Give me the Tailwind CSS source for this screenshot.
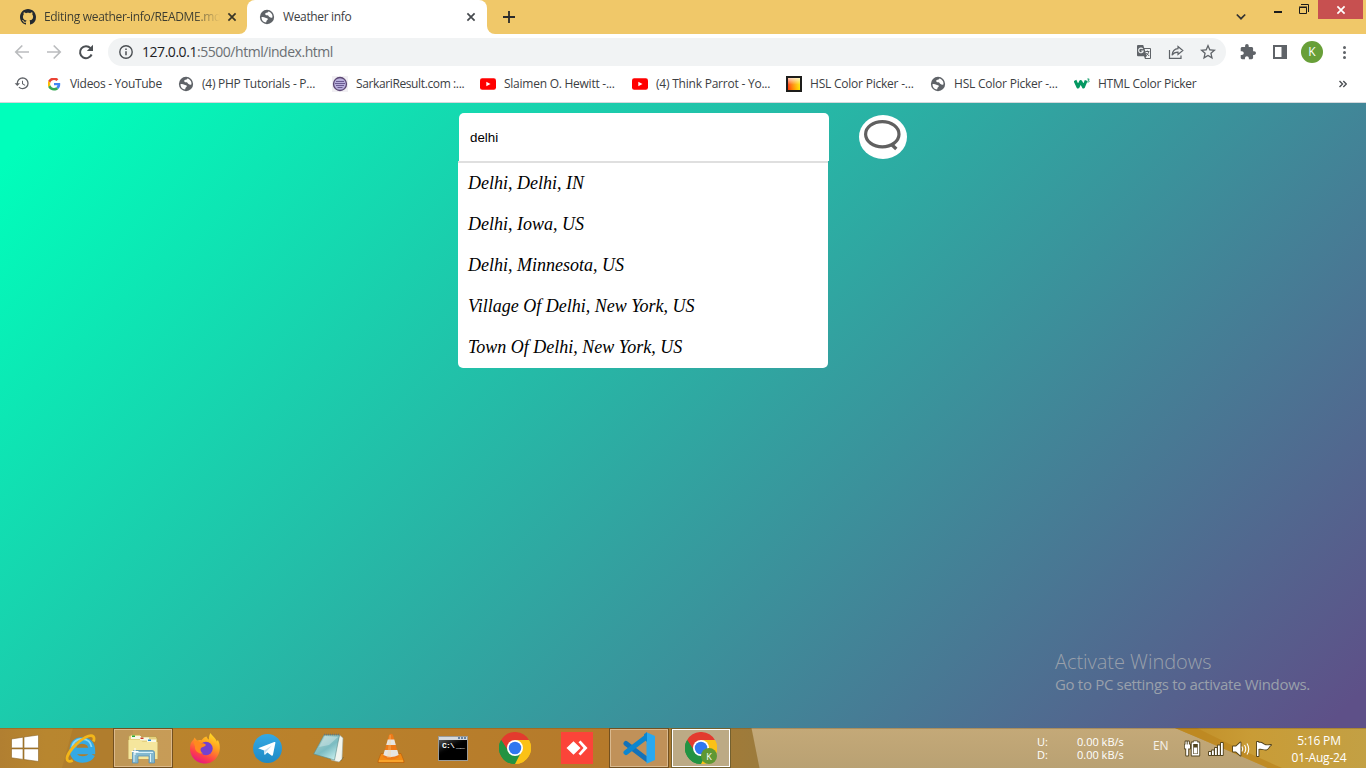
<!DOCTYPE html>
<html lang="en">
<head>
<meta charset="utf-8">
<title>Weather info</title>
<script src="https://cdn.jsdelivr.net/npm/@tailwindcss/browser@4"></script>
</head>
<body class="w-[1366px] h-[768px] overflow-hidden flex flex-col font-['Open_Sans',sans-serif] text-[12px] text-[#3c4043] bg-white">

<svg class="hidden">
  <symbol id="globe" viewBox="0 0 24 24"><circle cx="12" cy="12" r="10.700" fill="#5f6368"/><path fill="#fff" d="M3.800 12c2.500-.5 4.200.2 5.700 1 1.700.9 3.500.2 3.800 2 .2 1.500-1.700 1.700-2.100 3.100-.2.800-.2 1.400-.6 2.200C6.600 20 3.600 16.800 3.800 12zM14 3.800c-.5 1.300-1.600 1.800-3 2-1.500.2-1.800 1.400-1.500 2.400.4 1.300 2.200 1 3.400 1.200 1.600.3 1.300 2 2.900 2.500 1.300.4 1.700 1.300 2.800 1.400l1.500-.4C21 8.600 18 4.800 14 3.800z"/></symbol>
  <symbol id="yt" viewBox="0 0 16 16"><rect x="0" y="2.300" width="16" height="11.400" rx="2.200" fill="#f00"/><path fill="#fff" d="M6.300 5.800v4.400L10.500 8z"/></symbol>
  <symbol id="x" viewBox="0 0 10 10"><path d="M1.400 1.400l7.200 7.200M8.600 1.400L1.400 8.600" stroke="currentColor" stroke-width="1.700" fill="none"/></symbol>
  <symbol id="chrome" viewBox="0 0 48 48">
    <path fill="#e33b2e" d="M24 24L3.200 12A24 24 0 0 1 44.800 12z"/>
    <path fill="#fbc116" d="M24 24L44.800 12A24 24 0 0 1 24 48z"/>
    <path fill="#229342" d="M24 24L24 48A24 24 0 0 1 3.200 12z"/>
    <path fill="#e33b2e" d="M3.200 12H44.800L24 13 14.500 29.500z"/>
    <path fill="#fbc116" d="M44.800 12H24L33.500 29.500 24 48A24 24 0 0 0 44.800 12z"/>
    <path fill="#229342" d="M3.200 12L14.500 29.500 24 35 33.500 29.500 24 48A24 24 0 0 1 3.200 12z"/>
    <circle cx="24" cy="24" r="12" fill="#fff"/><circle cx="24" cy="24" r="9.400" fill="#2f77f0"/>
  </symbol>
</svg>

<!-- tab strip -->
<header class="h-[34px] shrink-0 bg-[#f0c869] flex">
  <div class="w-[247px] flex items-center pl-5 bg-[#f0c869]">
    <svg class="size-4 shrink-0" viewBox="0 0 16 16"><path fill="#24292f" d="M8 0C3.580 0 0 3.580 0 8c0 3.540 2.290 6.530 5.470 7.590.4.070.55-.17.55-.38 0-.19-.01-.82-.01-1.490-2.010.37-2.530-.49-2.690-.94-.09-.23-.48-.94-.82-1.130-.28-.15-.68-.52-.01-.53.63-.01 1.080.58 1.230.82.72 1.210 1.870.87 2.330.66.07-.52.28-.87.51-1.070-1.780-.2-3.640-.89-3.640-3.950 0-.87.31-1.590.82-2.150-.08-.2-.36-1.020.08-2.120 0 0 .67-.21 2.200.82.64-.18 1.320-.27 2-.27s1.360.09 2 .27c1.530-1.040 2.200-.82 2.200-.82.44 1.100.16 1.920.08 2.120.51.56.82 1.270.82 2.150 0 3.070-1.870 3.750-3.650 3.950.29.25.54.73.54 1.480 0 1.070-.01 1.930-.01 2.200 0 .21.15.46.55.38A8.010 8.010 0 0 0 16 8c0-4.420-3.580-8-8-8z"/></svg>
    <div class="ml-2 w-[176px] overflow-hidden whitespace-nowrap tracking-[-0.32px] bg-linear-to-r from-[#3c3c30] from-85% to-transparent bg-clip-text text-transparent">Editing weather-info/README.md</div>
    <svg class="ml-[7px] size-[10px] text-[#3a3626]"><use href="#x"/></svg>
  </div>
  <div class="w-[240px] flex items-center pl-3 bg-white rounded-t-lg relative">
    <div class="absolute -left-2 bottom-0 size-2 bg-white"><div class="size-2 bg-[#f0c869] rounded-br-lg"></div></div>
    <div class="absolute -right-2 bottom-0 size-2 bg-white"><div class="size-2 bg-[#f0c869] rounded-bl-lg"></div></div>
    <svg class="size-4"><use href="#globe"/></svg>
    <div class="ml-2 w-[183px] whitespace-nowrap tracking-[-0.35px]">Weather info</div>
    <svg class="size-[10px] text-[#45494d]"><use href="#x"/></svg>
  </div>
  <svg class="ml-4 mt-[11px] size-3" viewBox="0 0 12 12"><path d="M6 0v12M0 6h12" stroke="#2b2b2b" stroke-width="1.800"/></svg>
  <div class="grow"></div>
  <svg class="mt-[13px] w-[10px] h-2" viewBox="0 0 10 8"><path d="M.8 1.500L5 5.700 9.200 1.500" fill="none" stroke="#333" stroke-width="1.700"/></svg>
  <div class="ml-[28px] mt-[11px] w-2 h-[2px] bg-[#1b1b1b]"></div>
  <svg class="ml-[17px] mt-1 size-[10px]" viewBox="0 0 10 10"><path fill="none" stroke="#1b1b1b" d="M2 .5h7.500V8M.5 3.500h7v6h-7z"/><path stroke="#1b1b1b" d="M0 3h8"/></svg>
  <div class="ml-[9px] w-[45px] h-[19px] mr-[3px] bg-[#c75050] flex items-center justify-center text-white"><svg class="size-[10px]"><use href="#x"/></svg></div>
</header>

<!-- toolbar -->
<div class="h-[36px] shrink-0 flex items-center">
  <svg class="ml-3 size-5" viewBox="0 0 20 20"><path d="M17 10H4M10.300 3.500L3.800 10l6.500 6.500" fill="none" stroke="#babcbe" stroke-width="1.700"/></svg>
  <svg class="ml-3 size-5" viewBox="0 0 20 20"><path d="M3 10h13M9.700 3.500l6.500 6.500-6.500 6.500" fill="none" stroke="#babcbe" stroke-width="1.700"/></svg>
  <svg class="ml-3 size-5" viewBox="0 0 20 20"><path d="M15.600 12.500A6 6 0 1 1 14.500 6.200" fill="none" stroke="#4b4f53" stroke-width="2"/><path d="M17 2.800V9h-6.200z" fill="#4b4f53"/></svg>
  <div class="ml-3 w-[1118px] h-7 rounded-full bg-[#f1f3f4] flex items-center pl-[11px]">
    <svg class="size-[14px]" viewBox="0 0 14 14"><circle cx="7" cy="7" r="6.200" fill="none" stroke="#4b4f53" stroke-width="1.400"/><path d="M7 6.200v4M7 3.500v1.500" stroke="#4b4f53" stroke-width="1.500"/></svg>
    <div class="ml-[9px] grow text-[14px] leading-5 tracking-[-0.46px] text-[#6b6f73]"><span class="text-[#202124]">127.0.0.1</span>:5500/html/index.html</div>
    <svg class="size-4" viewBox="0 0 16 16"><path fill="#5f6368" d="M2 1h5.200l1 3H14a1 1 0 0 1 1 1v9a1 1 0 0 1-1 1H9l-1-2.800H2a1 1 0 0 1-1-1V2a1 1 0 0 1 1-1z"/><path fill="#f1f3f4" d="M8.600 5H14v9H9.600l1-2z"/><path fill="none" stroke="#f1f3f4" stroke-width="1.100" d="M6.800 5A2.300 2.300 0 1 0 7.200 7H5.200"/><path fill="none" stroke="#5f6368" d="M9.300 7.500h4M11.300 6.500v1M12.700 7.500c-.3 2-1.200 3-2.600 4.200M10.200 9l3 3"/></svg>
    <svg class="ml-4 size-4" viewBox="0 0 16 16"><path fill="none" stroke="#5f6368" stroke-width="1.200" d="M1.500 6v8.300H13V11.500M10 2.500l4.800 4-4.800 4V8.200C7.500 8.200 5.500 9 4 11.200 4.400 7.800 6.300 5 10 4.700z"/></svg>
    <svg class="ml-4 mr-[10px] size-4" viewBox="2 2 20 20"><path fill="#5f6368" d="M22 9.240l-7.190-.62L12 2 9.190 8.630 2 9.240l5.460 4.730L5.820 21 12 17.270 18.180 21l-1.630-7.030L22 9.240zM12 15.400l-3.760 2.270 1-4.280-3.320-2.880 4.380-.38L12 6.100l1.710 4.040 4.380.38-3.320 2.880 1 4.280L12 15.400z"/></svg>
  </div>
  <svg class="ml-[14px] size-4" viewBox="1 1 22 22"><path fill="#5f6368" d="M20.500 11H19V7c0-1.100-.9-2-2-2h-4V3.500a2.500 2.500 0 0 0-5 0V5H4c-1.100 0-2 .9-2 2v3.800h1.500c1.490 0 2.700 1.210 2.700 2.700s-1.210 2.700-2.700 2.700H2V20c0 1.100.9 2 2 2h3.800v-1.500c0-1.490 1.210-2.700 2.700-2.700s2.700 1.210 2.700 2.700V22H17c1.100 0 2-.9 2-2v-4h1.500a2.500 2.500 0 0 0 0-5z"/></svg>
  <svg class="ml-[17px] size-[14px]" viewBox="0 0 14 14"><path fill="#5f6368" fill-rule="evenodd" d="M0 0h14v14H0zM2 2v10h6.500V2z"/></svg>
  <div class="ml-[14px] size-[22px] rounded-full bg-[#689f38] text-white text-[12px] leading-none flex items-center justify-center">K</div>
  <div class="ml-[20px] flex flex-col gap-[2px]"><i class="size-[3px] rounded-full bg-[#5f6368]"></i><i class="size-[3px] rounded-full bg-[#5f6368]"></i><i class="size-[3px] rounded-full bg-[#5f6368]"></i></div>
</div>

<!-- bookmarks bar -->
<nav class="h-[33px] shrink-0 border-b border-[#d5d8dc] pb-1 flex items-center whitespace-nowrap pl-[14px]">
  <svg class="size-4 mr-4" viewBox="0 1 24 24"><path fill="#5f6368" d="M13 3a9 9 0 0 0-9 9H1l3.890 3.890.070.140L9 12H6c0-3.870 3.130-7 7-7s7 3.130 7 7-3.130 7-7 7c-1.930 0-3.680-.79-4.940-2.060l-1.420 1.420A8.954 8.954 0 0 0 13 21a9 9 0 0 0 0-18zm-1 5v5l4.280 2.540.72-1.210-3.500-2.080V8H12z"/></svg>
  <svg class="size-4 p-[1.500px]" viewBox="0 0 48 48"><path fill="#EA4335" d="M24 9.500c3.540 0 6.710 1.220 9.210 3.600l6.850-6.850C35.900 2.380 30.470 0 24 0 14.620 0 6.510 5.380 2.560 13.220l7.980 6.190C12.430 13.720 17.740 9.500 24 9.500z"/><path fill="#4285F4" d="M46.980 24.550c0-1.570-.15-3.090-.38-4.550H24v9.020h12.940c-.58 2.960-2.260 5.480-4.780 7.180l7.730 6c4.510-4.180 7.090-10.360 7.090-17.650z"/><path fill="#FBBC05" d="M10.530 28.590c-.48-1.450-.76-2.990-.76-4.590s.27-3.140.76-4.590l-7.980-6.190C.92 16.460 0 20.120 0 24c0 3.880.92 7.540 2.560 10.780l7.970-6.190z"/><path fill="#34A853" d="M24 48c6.480 0 11.930-2.130 15.890-5.810l-7.730-6c-2.150 1.450-4.920 2.300-8.160 2.300-6.260 0-11.570-4.220-13.470-9.910l-7.980 6.190C6.510 42.620 14.620 48 24 48z"/></svg>
  <span class="ml-2 w-[108px] tracking-[-0.3px]">Videos - YouTube</span>
  <svg class="size-4"><use href="#globe"/></svg>
  <span class="ml-2 w-[130px] tracking-[-0.25px]">(4) PHP Tutorials - P...</span>
  <svg class="size-4" viewBox="0 0 16 16"><path fill="#f1eff3" d="M0 0h16v16H0z"/><circle cx="8" cy="8" r="6.500" fill="#b9b0dc" stroke="#5a4672" stroke-width="1.300"/><path stroke="#6a5b92" d="M4 5.500h8M3 7.500h10M4 9.500h8M5.500 11.500h5"/></svg>
  <span class="ml-2 w-[124px] tracking-[-0.38px]">SarkariResult.com :...</span>
  <svg class="size-4"><use href="#yt"/></svg>
  <span class="ml-2 w-[128px] tracking-[-0.25px]">Slaimen O. Hewitt -...</span>
  <svg class="size-4"><use href="#yt"/></svg>
  <span class="ml-2 w-[130px] tracking-[-0.22px]">(4) Think Parrot - Yo...</span>
  <div class="size-4 border-2 border-[#1d1d1b] bg-linear-to-r from-[#ff2c00] to-[#ffe600]"><div class="size-3 bg-linear-to-b from-white/75 via-white/10 via-55% to-transparent"></div></div>
  <span class="ml-2 w-[120px] tracking-[-0.22px]">HSL Color Picker -...</span>
  <svg class="size-4"><use href="#globe"/></svg>
  <span class="ml-2 w-[120px] tracking-[-0.22px]">HSL Color Picker -...</span>
  <svg class="size-4" viewBox="0 0 16 16"><path fill="none" stroke="#059862" stroke-width="3" stroke-linejoin="round" d="M1 4.500l3 6.500 2.700-5.500L9.500 11l2.700-6.500"/><path fill="none" stroke="#059862" stroke-width=".9" d="M13.300 3h1.900l-1 1.300c1.500 0 1.500 2.200-.9 1.700"/></svg>
  <span class="ml-2 w-[241px] tracking-[-0.25px]">HTML Color Picker</span>
  <svg class="w-2 h-2" viewBox="0 0 8 8"><path fill="none" stroke="#4b4f53" stroke-width="1.400" d="M.5 1l3 3-3 3M4.300 1l3 3-3 3"/></svg>
</nav>

<!-- page -->
<main class="h-[625px] shrink-0 relative bg-[linear-gradient(135deg,#00ffbb_3%,#5e5088_98%)] flex pl-[458px] pt-[10px] items-start">
  <section class="w-[371px]">
    <div class="ml-px w-[370px] h-12 rounded-t-[5px] bg-white flex items-center px-[11px] pt-px font-['Liberation_Sans',sans-serif] text-[13.33px] text-black">delhi</div>
    <ul class="w-[370px] border-t-2 border-[#dfdfdf] rounded-b-[5px] bg-white text-black font-['Liberation_Serif',serif] italic text-[18px]">
      <li class="h-[41px] px-[10px] leading-[40px]">Delhi, Delhi, IN</li>
      <li class="h-[41px] px-[10px] leading-[40px]">Delhi, Iowa, US</li>
      <li class="h-[41px] px-[10px] leading-[40px]">Delhi, Minnesota, US</li>
      <li class="h-[41px] px-[10px] leading-[40px]">Village Of Delhi, New York, US</li>
      <li class="h-[41px] px-[10px] leading-[40px]">Town Of Delhi, New York, US</li>
    </ul>
  </section>
  <button class="ml-[30px] mt-[2px] w-12 h-11 rounded-[50%] bg-white"><svg class="w-12 h-11" viewBox="0 0 48 44"><ellipse cx="23.300" cy="19.200" rx="16.700" ry="12.600" fill="none" stroke="#606060" stroke-width="3.200"/><path d="M32 29l5.300 5" stroke="#606060" stroke-width="3.400"/></svg></button>
  <aside class="absolute left-[1055px] top-[547px] text-[#99a0ab] whitespace-nowrap">
    <div class="text-[20px] leading-6 tracking-[-0.03px] font-light">Activate Windows</div>
    <div class="text-[15px] leading-[20px] tracking-[-0.32px]">Go to PC settings to activate Windows.</div>
  </aside>
</main>

<!-- taskbar -->
<footer class="h-10 shrink-0 relative flex text-white">
  <svg class="absolute inset-0 w-[1366px] h-10" viewBox="0 0 1366 40" preserveAspectRatio="none">
    <defs>
      <linearGradient id="a"><stop offset="0" stop-color="#b17f31"/><stop offset=".06" stop-color="#b8862f"/><stop offset=".4" stop-color="#ba812b"/><stop offset=".8" stop-color="#b57a2b"/><stop offset="1" stop-color="#9c7b3c"/></linearGradient>
      <linearGradient id="b" x2="0" y2="1"><stop offset="0" stop-color="#c4a978"/><stop offset="1" stop-color="#b9a173"/></linearGradient>
      <linearGradient id="c"><stop offset="0" stop-color="#c08d26"/><stop offset=".4" stop-color="#c99c36"/><stop offset="1" stop-color="#c3a044"/></linearGradient>
    </defs>
    <path fill="url(#a)" d="M0 0h760v40H0z"/><path fill="#a7752b" fill-opacity=".5" d="M73 0h60v40H62z"/>
    <path fill="url(#b)" d="M751.500 0H1366v40H759.500z"/>
    <path fill="url(#c)" d="M1175 0h191v40h-98q-50-22-93-40z"/><path fill="#bd8720" fill-opacity=".8" d="M1175 0h22q35 18 85 40h-14q-50-22-93-40z"/>
    <path fill="#5a3d0a" fill-opacity=".25" d="M0 0h1366v1H0z"/>
  </svg>
  <div class="relative w-[52px] flex items-center pl-[11px]"><svg class="w-[28px] h-[27px]" viewBox="0 0 28 27"><path fill="#fff" stroke="#8c6526" stroke-width=".6" d="M.5 4l11.500-1.800V12.900H.5zM13 2l14.500-2v12.900H13zM.5 13.900H12v10.500L.5 22.800zM13 13.900h14.500v12.600L13 24.500z"/></svg></div>
  <div class="relative flex gap-1">
    <div class="w-[58px] flex items-center justify-center"><svg class="size-8" viewBox="0 0 32 32"><path fill="none" stroke="#35a9e4" stroke-width="6.400" d="M27 22.500c-1.800 3.600-5 5-9.500 5-6.500 0-9.700-4-9.700-9.700S11 8.500 17 8.500s10 3.500 10 10.500H10"/><path fill="none" stroke="#8ad8f7" stroke-width="1.800" d="M7 17c0-6 4-10 10-10s9 4 9.500 8"/><path fill="none" stroke="#f3b619" stroke-width="2.800" d="M28.500 9.500c1.600-4.500-.5-7-5-5.500C16 6.500 5 17 2.300 24.500c-1 4 1 6 5.400 4"/></svg></div>
    <div class="w-[58px] border border-[#dcb98a] bg-white/20 outline outline-[#73501f] my-px flex items-center justify-center"><svg class="w-8 h-8" viewBox="0 0 32 32"><path fill="#e6d27e" stroke="#b6984b" stroke-width=".7" d="M1.500 4.500l3-2h8l2 2H29l1.500 3v18h-29z"/><path fill="#f8f7e5" d="M4 4h10v3H4zM13 5.500h9v3h-9zM20 7.500h9v3h-9z"/><path fill="#22aa35" d="M5 3.500h3V5H5z"/><path fill="#cf3f28" d="M13.500 5.500h3V7h-3z"/><path fill="#2489d0" d="M21 7.500h3V9h-3z"/><path fill="#f5e69c" d="M1.500 8h12l2 2h15v17h-29z"/><path fill="#83b9d0" stroke="#5a91b2" stroke-width=".8" d="M5.500 20.500q0-2 2-2h17.500q2.500 0 2.500 2V31H22v-7H11v7H5.500z"/><path fill="none" stroke="#d8f2fb" d="M7 30v-9.500h19M23.500 22v8"/><path fill="none" stroke="#fff" d="M8 16v7M4.500 19.500h7"/></svg></div>
    <div class="w-[58px] flex items-center justify-center"><svg class="size-8" viewBox="0 0 32 32"><defs><linearGradient id="fx" x1=".8" y1="0" x2=".3" y2="1"><stop offset="0" stop-color="#ffe226"/><stop offset=".4" stop-color="#ff9a20"/><stop offset=".75" stop-color="#ff4048"/><stop offset="1" stop-color="#e31587"/></linearGradient></defs><path fill="url(#fx)" d="M5.500 5.500l2.500 3c1.500-.6 3-.7 4.500-.3 1.500-2 3-3 5-3.700.5 1.500 1.300 2.500 2.500 3.200-.2-2.700.3-5 1.500-6.700 2 3.500 5.500 5 6.200 8.500l1.200-1.500c1.400 2.500 2.100 5.500 1.900 8.700C30.300 25 24 31.500 16 31.500S1.200 25.500 1 17c0-4.500 1-7.500 3.600-9.500z"/><circle cx="17" cy="16.500" r="6.700" fill="#7441ce"/><path fill="#ff8a1e" d="M4.500 10c3.500-2 6-.5 7.500 1.500 2-.5 4 .2 5 1.500-1 2-3.600 1.500-5 3-1 1.500-.5 4 2 5.500-5 .5-8.500-3-8-7z"/></svg></div>
    <div class="w-[58px] flex items-center justify-center"><svg class="size-[29px]" viewBox="0 0 28 28"><defs><linearGradient id="tg" x2="0" y2="1"><stop stop-color="#34a9e4"/><stop offset="1" stop-color="#2089c4"/></linearGradient></defs><circle cx="14" cy="14" r="14" fill="url(#tg)"/><path fill="#fff" d="M5 13.800L20.500 7.700c.8-.3 1.300.2 1.100 1.100L19.300 20c-.2.9-.8 1.100-1.500.7l-3.900-2.900-2.100 2c-.5.400-.9.200-.9-.4l-.2-3.400z"/><path fill="#c5dff0" d="M10.500 16.200l7.800-5-6 6.300-.7 2.500z"/></svg></div>
    <div class="w-[58px] flex items-center justify-center"><svg class="size-8" viewBox="0 0 32 32"><defs><linearGradient id="np" x2=".7" y2="1"><stop stop-color="#b9d5ce"/><stop offset=".6" stop-color="#7bbcc2"/><stop offset="1" stop-color="#c0eaea"/></linearGradient></defs><path fill="#735823" d="M24 28l7-3-3 4z"/><path fill="#f1f5ef" stroke="#9ba6a0" stroke-width=".6" d="M26.500 3l3.500 3-1 21-3 3-8-2z"/><path fill="url(#np)" stroke="#5c8a86" stroke-width=".6" d="M11 3h15.500l-5 25L.7 22z"/><path stroke="#6c7674" stroke-width="1.500" stroke-dasharray="1 1" d="M11 2.500h16"/><path fill="#fff" fill-opacity=".3" d="M12 4l13 1-9 8-10 2z"/></svg></div>
    <div class="w-[58px] flex items-center justify-center"><svg class="size-8" viewBox="0 0 32 32"><path fill="#f28a13" stroke="#b95d09" stroke-width=".6" d="M6 21.500h20l3 7.500v1.500H3V29z"/><path fill="#ee7a18" d="M14 3q2-2.500 4 0l6 22q-8 5-16 0z"/><path fill="#e6e5e2" d="M12.800 7.500h6.500l1.500 5.500h-9.600zM9.800 18h12.500l1.400 5q-7.700 4-15.400 0z"/><path fill="#ffd18a" fill-opacity=".3" d="M14.500 3h1.500v23h-4z"/><path stroke="#ffbc45" d="M4 29h24"/></svg></div>
    <div class="w-[58px] flex items-center justify-center"><div class="w-[30px] h-[25px] bg-black border border-[#9b9b98] flex flex-col"><div class="h-[3px] bg-[#d5d8dc] flex justify-end gap-px pr-px items-center"><i class="size-[2px] bg-[#6480a0]"></i><i class="size-[2px] bg-[#6480a0]"></i><i class="size-[2px] bg-[#6480a0]"></i></div><div class="h-[15px] pl-[3px] font-['Liberation_Mono',monospace] text-[8px] leading-[12px] font-bold tracking-[-0.8px] bg-linear-to-br from-[#555] to-black to-60%">C:\<span class="ml-[2px]">__</span></div></div></div>
    <div class="w-[58px] flex items-center justify-center"><svg class="size-8"><use href="#chrome"/></svg></div>
    <div class="w-[58px] flex items-center justify-center"><svg class="size-8" viewBox="0 0 32 32"><path fill="#fb4439" d="M0 0h32v32H0z"/><path fill="#fff" d="M12.500 9.200l7 6.800-7 6.800L5.500 16zM17.500 10.200l2-1.700 7 7.500-7 7.500-2-1.700 5-5.800z"/></svg></div>
    <div class="w-[58px] border border-[#d9b98f] bg-[#c09159] outline outline-[#73501f] my-px flex items-center justify-center"><svg class="size-8" viewBox="0 0 32 32"><path fill="none" stroke="#1372b9" stroke-width="5" stroke-linejoin="round" stroke-linecap="round" d="M3 11.500L24 27.500"/><path fill="none" stroke="#0b86d0" stroke-width="5" stroke-linecap="round" d="M3 20.500L24 4.500"/><path fill="#29a8ee" d="M23.500.3L32 4v24l-8.500 3.700z"/><path fill="#0b86d0" d="M24 0l-3 2.300v4.700l3 3z"/></svg></div>
    <div class="w-[58px] border border-white bg-[#bcaa85] outline outline-[#73602f] my-px flex items-center justify-center relative"><svg class="size-8"><use href="#chrome"/></svg><div class="absolute left-[28px] top-[18px] size-4 rounded-full bg-[#5f9833] text-[9px] leading-none flex items-center justify-center">K</div></div>
  </div>
  <div class="relative ml-[307px] flex">
    <div class="w-[40px] pt-[7px] text-[11px] leading-[13px] tracking-[-0.1px]">U:<br>D:</div>
    <div class="w-[76px] pt-[7px] text-[11px] leading-[13px] tracking-[0px] whitespace-nowrap">0.00 kB/s<br>0.00 kB/s</div>
    <div class="w-[31px] pt-[9px] leading-[18px] text-[12px] tracking-[-0.2px] text-white/85">EN</div>
    <svg class="mt-3 w-[90px] h-[17px]" viewBox="0 0 90 17"><g fill="#fff" stroke="#51431f" stroke-width="1.800" paint-order="stroke" stroke-linejoin="round">
      <path d="M1.500 1.500h1.200v3h1V1.500h1.200v3H6v4H4.200v7h-2v-7H.8v-4h.7z"/>
      <path d="M7.700 2.500h2v-1.200h3.600v1.200h2v13H7.700z"/>
      <path d="M25 12h1.800v3H25zM28 10.500h1.800V15H28zM31 8h1.800v7H31zM34 5.500h1.800V15H34zM37 3h1.800v12H37z"/>
      <path d="M49 6.500h3l4.500-4v13l-4.500-4h-3z"/>
      <path d="M73 2h1.500v1c3-1 4 .500 5.500 1.500s4 1 7 .5c-2 1-2.500 4-4.500 4.500-3 .500-4-1.500-8-.5v7H73z"/></g>
      <path fill="#51431f" d="M9.200 4h4.600v10H9.200z"/><path fill="#fff" d="M9.800 7.500h3.400v6H9.800z"/>
      <path d="M58 6.500q1.500 2.500 0 5M60.500 5q2.500 4 0 8M63 3.500q3.500 5.500 0 11" fill="none" stroke="#fff" stroke-width="1.100"/></svg>
    <div class="w-[90px] pt-[4px] text-center text-[12px] leading-[17px] tracking-[-0.2px]">5:16 PM<br>01-Aug-24</div>
  </div>
</footer>
</body>
</html>
